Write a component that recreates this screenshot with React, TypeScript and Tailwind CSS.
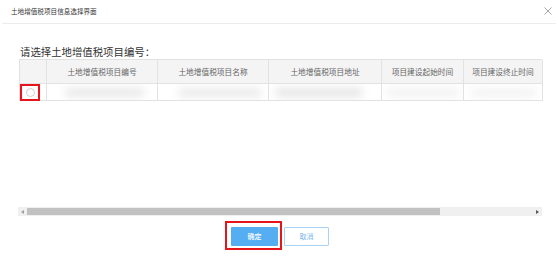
import React from 'react'

const cols = [
  { title: '', w: 'w-[27px]' },
  { title: '土地增值税项目编号', w: 'w-[111px]' },
  { title: '土地增值税项目名称', w: 'w-[111px]' },
  { title: '土地增值税项目地址', w: 'w-[113px]' },
  { title: '项目建设起始时间', w: 'w-[82px]' },
  { title: '项目建设终止时间', w: 'w-[79px]' },
]

// blurred placeholders standing in for the masked row values
const smears = [
  'ml-[18px] w-[80px] bg-[#e8e8e8]',
  'ml-[20px] w-[84px] bg-[#eaeaea]',
  'ml-[6px] w-[88px] bg-[#e5e5e5]',
  'ml-[4px] w-[74px] bg-[#f2f2f2]',
  'ml-[6px] w-[68px] bg-[#f3f3f3]',
]

const App = () => {
  return (
    <div className="w-[558px] h-[280px] bg-white flex flex-col font-['Noto_Sans_CJK_SC','Noto_Sans',sans-serif] overflow-hidden">
      <div className="mx-[2px] h-[24px] flex items-center justify-between pl-[9px] pr-[4px] border-b border-[#ececec]">
        <span className="text-[6.6px] text-[#333] leading-none">土地增值税项目信息选择界面</span>
        <svg width="8" height="8" viewBox="0 0 8 8" className="mb-[1px]">
          <path d="M0.5 0.5 L7.5 7.5 M7.5 0.5 L0.5 7.5" stroke="#9a9a9a" strokeWidth="0.9" />
        </svg>
      </div>

      <div className="pl-[19px] pr-[16px] pt-[21px]">
        <h2 className="text-[10.4px] leading-[14px] text-[#333] pl-[1px]">请选择土地增值税项目编号：</h2>

        <div className="h-[157px] flex flex-col justify-between">
          <div className="flex flex-col border-l border-t border-[#e2e2e2] w-[523px]">
            <div className="flex bg-[#f4f4f4] h-[24px]">
              {cols.map((c, i) => (
                <div
                  key={i}
                  className={`${c.w} shrink-0 border-r border-b border-[#e2e2e2] flex items-center justify-center text-[7.7px] text-[#666]`}
                >
                  {c.title}
                </div>
              ))}
            </div>
            <div className="flex h-[17px]">
              <div className="w-[27px] shrink-0 border-r border-b border-[#e2e2e2] flex items-center">
                <div className="w-[20px] h-[17px] border-2 border-[#e8141b] flex items-center justify-center">
                  <div className="w-[9px] h-[9px] rounded-full border border-[#cfcfcf] bg-white" />
                </div>
              </div>
              {cols.slice(1).map((c, i) => (
                <div key={i} className={`${c.w} shrink-0 border-r border-b border-[#e2e2e2] flex items-center overflow-hidden`}>
                  <div className={`${smears[i]} h-[9px] rounded-full blur-[4px]`} />
                </div>
              ))}
            </div>
          </div>

          <div className="w-[524px] -ml-px h-[9px] bg-[#f0f0f0] flex items-center">
            <div className="w-[9px] h-[9px] flex items-center justify-center">
              <div className="w-0 h-0 border-y-[2px] border-y-transparent border-r-[3px] border-r-[#a0a0a0]" />
            </div>
            <div className="w-[413px] h-[7px] bg-[#c1c1c1]" />
            <div className="flex-1" />
            <div className="w-[9px] h-[9px] flex items-center justify-center">
              <div className="w-0 h-0 border-y-[2px] border-y-transparent border-l-[3px] border-l-[#555]" />
            </div>
          </div>
        </div>
      </div>

      <div className="mt-[5px] flex justify-center items-center pr-[4px]">
        <div className="border-2 border-[#e8141b] pt-[4px] pb-[2px] pl-[4px] pr-[2px]">
          <button className="w-[47px] h-[19px] bg-[#55adf2] text-white text-[7px] font-medium rounded-[1px] flex items-center justify-center">
            确定
          </button>
        </div>
        <button className="ml-[2px] mt-[2px] w-[45px] h-[19px] border border-[#a8d3f6] bg-white text-[#7bb8ee] text-[7px] rounded-[1px] flex items-center justify-center">
          取消
        </button>
      </div>
    </div>
  )
}

export default App
